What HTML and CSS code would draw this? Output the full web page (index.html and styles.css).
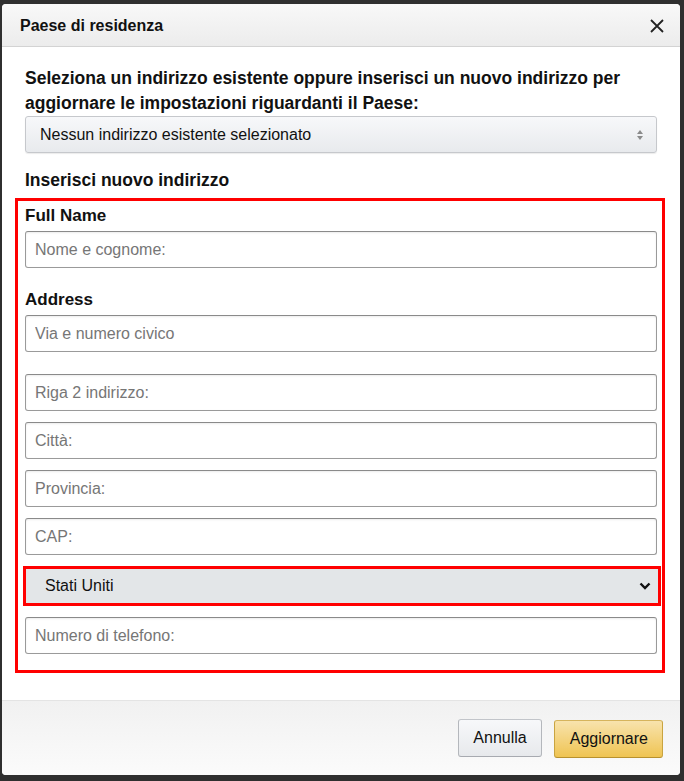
FILE: index.html
```html
<!DOCTYPE html>
<html lang="it">
<head>
<meta charset="utf-8">
<title>Paese di residenza</title>
<link rel="stylesheet" href="styles.css">
</head>
<body>
<div class="dialog">
  <div class="dialog-header">
    <h2 class="dialog-title">Paese di residenza</h2>
    <button class="close" aria-label="Chiudi">
      <svg width="14" height="14" viewBox="0 0 14 14"><path d="M1 1 L13 13 M13 1 L1 13" stroke="#222" stroke-width="1.8" fill="none"/></svg>
    </button>
  </div>
  <div class="dialog-body">
    <p class="intro">Seleziona un indirizzo esistente oppure inserisci un nuovo indirizzo per aggiornare le impostazioni riguardanti il Paese:</p>
    <div class="select select-existing">
      <span>Nessun indirizzo esistente selezionato</span>
      <svg class="updown" width="8" height="12" viewBox="0 0 8 12"><path d="M1 5 L4 1 L7 5 Z M1 7 L4 11 L7 7 Z" fill="#8a8a8a"/></svg>
    </div>
    <h3 class="section-title">Inserisci nuovo indirizzo</h3>
    <div class="highlight">
      <label class="field-label">Full Name</label>
      <input class="field" type="text" placeholder="Nome e cognome:">
      <label class="field-label label-address">Address</label>
      <input class="field" type="text" placeholder="Via e numero civico">
      <input class="field field-line2" type="text" placeholder="Riga 2 indirizzo:">
      <input class="field" type="text" placeholder="Città:">
      <input class="field" type="text" placeholder="Provincia:">
      <input class="field" type="text" placeholder="CAP:">
      <div class="select select-country">
        <span>Stati Uniti</span>
        <svg class="chevron" width="12" height="8" viewBox="0 0 12 8"><path d="M1.5 1.5 L6 6 L10.5 1.5" stroke="#111" stroke-width="2.4" fill="none"/></svg>
      </div>
      <input class="field" type="text" placeholder="Numero di telefono:">
    </div>
  </div>
  <div class="dialog-footer">
    <button class="btn btn-cancel">Annulla</button>
    <button class="btn btn-primary">Aggiornare</button>
  </div>
</div>
</body>
</html>
```

FILE: styles.css
```css
* { box-sizing: border-box; }

html, body {
  margin: 0;
  padding: 0;
  background: #2f2f2f;
  height: 781px;
  overflow: hidden;
}

body {
  font-family: "Liberation Sans", Arial, sans-serif;
  color: #111;
  padding: 4px 4px 6px 2px;
}

.dialog {
  width: 678px;
  height: 771px;
  background: #fff;
  border-radius: 4px;
  display: flex;
  flex-direction: column;
  overflow: hidden;
}

.dialog-header {
  height: 43px;
  flex: none;
  display: flex;
  align-items: center;
  justify-content: space-between;
  padding: 0 16px 0 18px;
  background: linear-gradient(#f8f8f8, #ececec);
  border-bottom: 1px solid #d3d3d3;
}

.dialog-title {
  margin: 0;
  font-size: 16px;
  font-weight: bold;
  color: #111;
  padding-top: 1px;
}

.close {
  border: 0;
  background: none;
  padding: 0;
  width: 14px;
  height: 14px;
  display: flex;
  margin-top: 1px;
}

.dialog-body {
  flex: 1;
  padding: 19px 23px 0 23px;
}

.intro {
  margin: 0;
  font-size: 17.5px;
  font-weight: bold;
  line-height: 25px;
}

.select {
  display: flex;
  align-items: center;
  justify-content: space-between;
  font-size: 16px;
  color: #111;
}

.select-existing {
  margin-top: 0;
  height: 37px;
  padding: 0 12px 0 14px;
  border: 1px solid #c6c8cc;
  border-radius: 3px;
  background: linear-gradient(#f7f8fa, #e8eaed);
  box-shadow: 0 1px 1px rgba(0, 0, 0, 0.08);
}

.updown { margin-top: 1px; }

.section-title {
  margin: 15px 0 0;
  font-size: 17.5px;
  font-weight: bold;
  line-height: 25px;
}

.highlight {
  margin: 5px -8px 0 -10px;
  border: 3px solid #ff0000;
  padding: 4px 5px 16px 7px;
  display: flex;
  flex-direction: column;
}

.field-label {
  font-size: 17px;
  font-weight: bold;
  line-height: 22px;
  margin-bottom: 4px;
}

.label-address { margin-top: 21px; }

.field {
  display: block;
  width: 100%;
  height: 37px;
  margin: 0;
  border: 1px solid #9a9a9a;
  border-top-color: #8a8a8a;
  border-radius: 3px;
  padding: 0 9px;
  font-family: "Liberation Sans", Arial, sans-serif;
  font-size: 16px;
  color: #111;
  background: #fff;
  box-shadow: inset 0 1px 2px rgba(0, 0, 0, 0.08);
  outline: none;
}

.field::placeholder { color: #767676; }

.field + .field { margin-top: 11px; }
.field-line2 { margin-top: 22px !important; }

.select-country {
  margin: 11px -4px 11px -2px;
  height: 40px;
  border: 3px solid #ff0000;
  background: #e3e6e8;
  padding: 0 7px 0 19px;
}

.dialog-footer {
  height: 75px;
  flex: none;
  border-top: 1px solid #e4e4e4;
  background: linear-gradient(#f1f1f1, #fbfbfb);
  display: flex;
  justify-content: flex-end;
  align-items: flex-start;
  gap: 12px;
  padding: 18px 17px 0 0;
}

.btn {
  height: 38px;
  padding: 0 14px;
  font-family: "Liberation Sans", Arial, sans-serif;
  font-size: 16px;
  color: #111;
  border-radius: 3px;
  cursor: pointer;
}

.btn-cancel {
  border: 1px solid #adb1b8;
  border-color: #c2c5ca #b4b7bc #a7aab0;
  background: linear-gradient(#f7f8fa, #e7e9ec);
}

.btn-primary {
  margin-top: 1px;
  border: 1px solid #c8a44c;
  border-color: #d6b45c #c9a440 #b8912e;
  background: linear-gradient(#f8e3ad, #efc453);
  padding: 0 14px 0 15px;
}
```
